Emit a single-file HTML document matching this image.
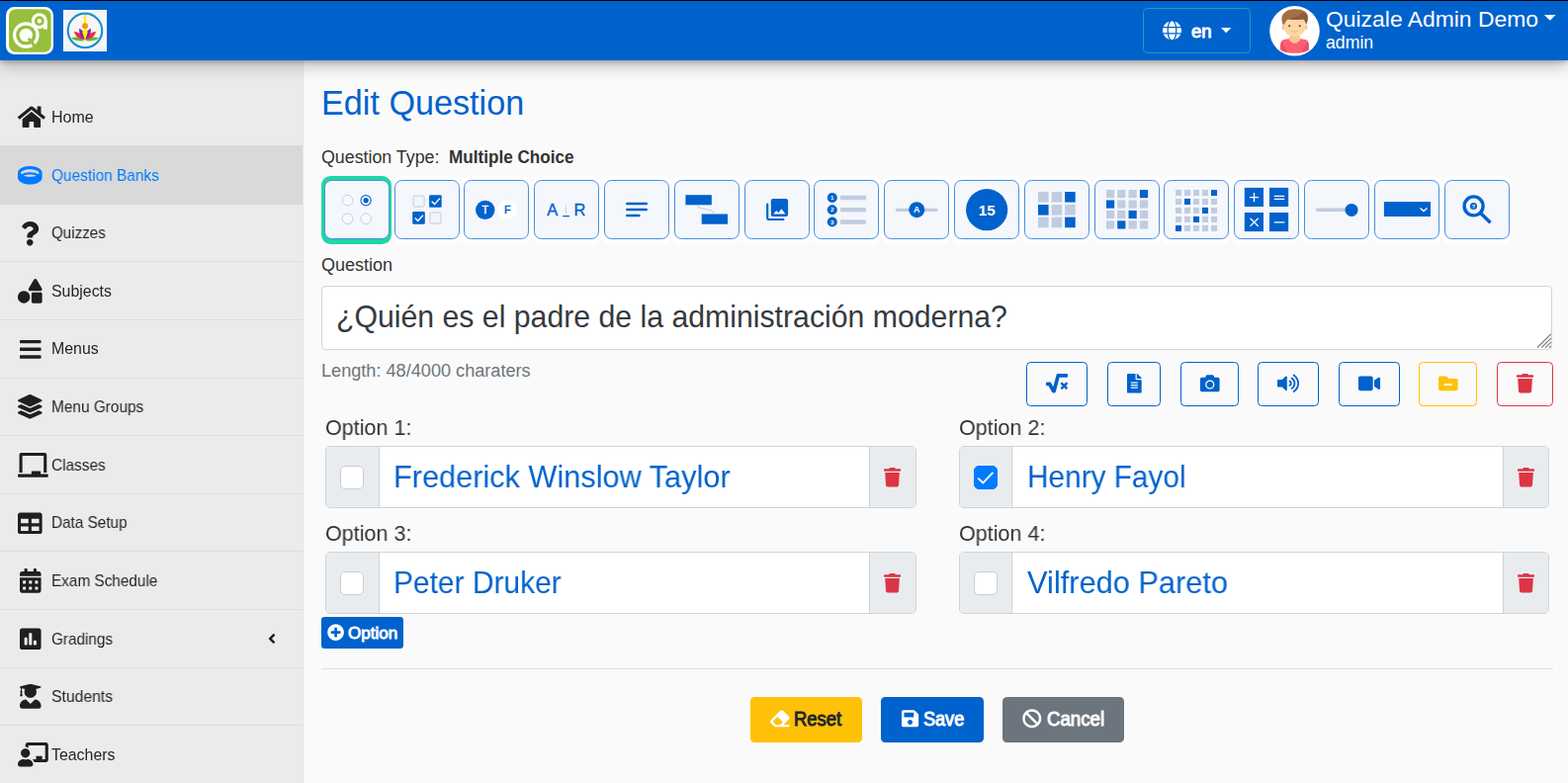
<!DOCTYPE html>
<html lang="en"><head><meta charset="utf-8"><title>Edit Question</title>
<style>
html,body{margin:0;padding:0}
header,aside,main{display:block;margin:0;padding:0}
a.t{text-decoration:none}
body{width:1586px;height:792px;overflow:hidden;position:relative;background:#fafafa;font-family:"Liberation Sans", sans-serif;}
.a{position:absolute;box-sizing:border-box}
.t{position:absolute;white-space:pre;margin:0;padding:0}
.ic{position:absolute;display:block;overflow:visible}

#nav{left:0;top:0;width:1586px;height:61px;background:#0062cc;border-top:1px solid #000;box-shadow:0 2px 4px rgba(0,0,0,.2),0 5px 16px rgba(0,0,0,.26);z-index:5}
#side{left:0;top:61px;width:306.5px;height:731px;background:#ebebeb;border-right:1px solid #e4e4e4}
.sl{left:0;width:306px;height:1px;background:#dcdcdc}
#act{left:0;top:147px;width:306px;height:59.7px;background:#d9d9d9}
#langb{left:1156px;top:8px;width:109.2px;height:45.8px;border:1px solid #17a2b8;border-radius:4.4px}
.tb{width:65.8px;height:60px;top:182px;border:1px solid #4a8fdc;border-radius:7.5px;background:#f4f7fb;overflow:hidden}
.tbw{width:71px;height:69px;top:178px;border-radius:9.5px;background:#fff}
.tbw.on{background:#20d6a6}
#ta{left:325.3px;top:289.1px;width:1245.2px;height:64.5px;background:#fff;border:1px solid #ced4da;border-radius:4.4px}
.mb{top:366.1px;height:44.8px;border:1px solid #0062cc;border-radius:4.4px}
.ig{height:62.7px;background:#fff;border:1px solid #ced4da;border-radius:5px;overflow:hidden}
.ig i{position:absolute;top:0;bottom:0;background:#e9ecef;box-sizing:border-box}
.ig i.p{left:0;width:54px;border-right:1px solid #ced4da}
.ig i.s{right:0;width:47.3px;border-left:1px solid #ced4da}
.cb{width:24px;height:24px;border-radius:5px;background:#fff;border:1.7px solid #c9ced4}
.cb.on{background:#007bff;border-color:#007bff}
.btn{border-radius:4.4px}

.t{z-index:7;transform-origin:0 0}

</style></head>
<body>
<header>
<div class="a" id="nav"></div>

<div class="a" id="langb" style="z-index:6;"></div>
<svg class="ic" style="z-index:6;left:1176.01px;top:21.10px;width:18.99px;height:19.60px" viewBox="0 -448 496 512"><path fill="#fff" transform="scale(1,-1)" d="M336.5 288h-177c14.5 89.2998 48.7002 152 88.5 152s74 -62.7002 88.5 -152zM152 192c0 22.2002 1.2002 43.5 3.2998 64h185.3c2.10059 -20.5 3.30078 -41.7998 3.30078 -64s-1.2002 -43.5 -3.30078 -64h-185.3c-2.09961 20.5 -3.2998 41.7998 -3.2998 64zM476.7 288 h-108c-8.7998 56.9004 -25.6006 107.8 -50 141.6c71.5 -21.1992 129.399 -73.6992 158 -141.6zM177.2 429.6c-24.4004 -33.7998 -41.2002 -84.6992 -49.9004 -141.6h-108c28.5 67.9004 86.5 120.4 157.9 141.6zM487.4 256c5.39941 -20.5 8.5 -41.7998 8.5 -64 s-3.10059 -43.5 -8.60059 -64h-114.6c2.09961 21 3.2998 42.5 3.2998 64s-1.2002 43 -3.2998 64h114.7zM120 192c0 -21.5 1.2002 -43 3.2002 -64h-114.601c-5.39941 20.5 -8.59961 41.7998 -8.59961 64s3.2002 43.5 8.59961 64h114.7 c-2.09961 -21 -3.2998 -42.5 -3.2998 -64zM159.5 96h177c-14.5 -89.2998 -48.7002 -152 -88.5 -152s-74 62.7002 -88.5 152zM318.8 -45.5996c24.4004 33.7998 41.2002 84.6992 50 141.6h108c-28.5996 -67.9004 -86.5996 -120.4 -158 -141.6zM19.2998 96h108 c8.7998 -56.9004 25.6006 -107.8 50 -141.6c-71.5 21.1992 -129.399 73.6992 -158 141.6z"/></svg>
<svg class="ic" style="z-index:6;left:1235px;top:28.2px;width:10.4px;height:5.2px" viewBox="0 0 10 5"><path d="M0 0H10L5 5Z" fill="#fff"/></svg>
<svg class="ic" style="z-index:6;left:1561.6px;top:15.4px;width:11.6px;height:5.8px" viewBox="0 0 10 5"><path d="M0 0H10L5 5Z" fill="#fff"/></svg>

<svg class="ic" style="z-index:6;left:6px;top:7px;width:48px;height:48px" viewBox="0 0 48 48">
<rect x="0" y="0" width="48" height="48" rx="8.5" fill="#fff"/>
<rect x="3.05" y="2.2" width="42.6" height="43.6" rx="7" fill="#97be3c"/>
<circle cx="33.8" cy="14.2" r="8" fill="#fff"/>
<path d="M38 14.2h3.8v8.4h-3.8z" fill="#fff"/>
<circle cx="33.8" cy="14.2" r="4.9" fill="#97be3c"/>
<circle cx="33.8" cy="14.2" r="2.2" fill="#fff"/>
<circle cx="20.3" cy="28.5" r="13.3" fill="#fff"/>
<circle cx="20.3" cy="28.5" r="10.1" fill="#97be3c"/>
<circle cx="20.3" cy="28.5" r="6.7" fill="#fff"/>
<path d="M23.6 32.6L29.3 39.9" stroke="#97be3c" stroke-width="2.9" stroke-linecap="round"/>
</svg>
<svg class="ic" style="z-index:6;left:64px;top:10px;width:44px;height:42px" viewBox="0 0 44 42">
<rect x="0" y="0" width="44" height="42" fill="#f4f4f4"/>
<rect x="0.25" y="0.25" width="43.5" height="41.5" fill="none" stroke="#fff" stroke-width="0.5"/>
<circle cx="21.98" cy="20.9" r="17.2" fill="#f6f6f6" stroke="#fff" stroke-width="3.4"/>
<circle cx="21.98" cy="20.9" r="17.25" fill="none" stroke="#2090d0" stroke-width="2.2"/>
<path d="M21.98 4.9v9.6" stroke="#ffee00" stroke-width="2.3"/>
<path d="M7.8 28.6C12.5 26.6 17.5 27 21.2 31.4C16 32 11.5 31.4 7.8 28.6Z" fill="#5bbd2f"/>
<path d="M36.2 28.6C31.5 26.6 26.5 27 22.8 31.4C28 32 32.5 31.4 36.2 28.6Z" fill="#5bbd2f"/>
<path d="M11 21.9C16 22.4 20 25.4 21.6 30.2C16.5 29.6 11.8 27 11 21.9Z" fill="#ee2a5b"/>
<path d="M33 21.9C28 22.4 24 25.4 22.4 30.2C27.5 29.6 32.2 27 33 21.9Z" fill="#ee2a5b"/>
<path d="M16.2 18.8C21 21.3 22.8 25.3 22 30.6C17.6 27.6 15.6 23.6 16.2 18.8Z" fill="#7b2a9c"/>
<path d="M27.8 18.8C23 21.3 21.2 25.3 22 30.6C26.4 27.6 28.4 23.6 27.8 18.8Z" fill="#7b2a9c"/>
<path d="M22 18.3L24.7 22.6L22 31.2L19.3 22.6Z" fill="#ffee00"/>
<circle cx="21.98" cy="16.25" r="3" fill="#f7941d"/>
</svg>


<svg class="ic" style="z-index:6;left:1284px;top:5.6px;width:51px;height:50.6px" viewBox="0 0 51 50.6">
<defs><clipPath id="avc"><circle cx="25.5" cy="25.3" r="24.6"/></clipPath></defs>
<circle cx="25.5" cy="25.3" r="25.3" fill="#fff"/>
<g clip-path="url(#avc)">
<path d="M11.3 44.5C10.6 39 11.6 35.2 14.5 34.1L21 33H30L36.5 34.1C39.4 35.2 40.4 39 39.7 44.5C36 47.6 30.5 47.8 25.5 47.8S15 47.6 11.3 44.5Z" fill="#ff5f74"/>
<path d="M11.3 44.5C10.8 40.5 11.3 37 12.6 35.4L17.3 44.8L16.8 46.6Z" fill="#e8506a"/>
<path d="M39.7 44.5C40.2 40.5 39.7 37 38.4 35.4L33.7 44.8L34.2 46.6Z" fill="#e8506a"/>
<path d="M19.8 33.2C21 36.6 23 37.8 25.5 37.8S30 36.6 31.2 33.2L30 28.5H21Z" fill="#f9c78f"/>
<ellipse cx="14.3" cy="21.4" rx="1.7" ry="2.6" fill="#f7c58a"/>
<ellipse cx="36.7" cy="21.4" rx="1.7" ry="2.6" fill="#f7c58a"/>
<path d="M15.2 9H35.8V22.5C35.8 27.5 31.5 30.6 25.5 30.6S15.2 27.5 15.2 22.5Z" fill="#fdd7a3"/>
<path d="M13.6 18.8C11.6 13.5 12.3 8.5 16 6.3C18.5 3.6 24 2.6 28.5 3.6C33 3.4 37.6 5.6 38.7 9.5C39.4 12.4 38.6 16 37.2 18.8C36.4 16.6 35.6 14.8 34.8 13.6C29.5 14.3 22.5 14.2 18.4 13.6C17.4 15 15.8 16.2 15.2 18.8Z" fill="#a36f47"/>
<path d="M18.4 13.6C24 12.4 30 10 34 6.4C36.5 7.6 38 9.3 38.7 11C38.8 13.5 38.2 16.4 37.2 18.8C36.4 16.6 35.6 14.8 34.8 13.6C29.5 14.3 22.5 14.2 18.4 13.6Z" fill="#8e5d3b"/>
<circle cx="20.2" cy="20.3" r="1.05" fill="#5a3a2a"/>
<circle cx="30.7" cy="20.3" r="1.05" fill="#5a3a2a"/>
<path d="M22.3 24.9C24.2 26.5 26.8 26.5 28.7 24.9" stroke="#eeb37c" stroke-width="1" fill="none" stroke-linecap="round"/>
</g>
</svg>

<span class="t" id="uname" style="left:1340.92px;top:8.02px;font-size:22.8px;line-height:22.8px;font-weight:400;color:#fff;transform:scaleX(1.0042)">Quizale Admin Demo</span>
<span class="t" id="urole" style="left:1341.05px;top:35.02px;font-size:17.5px;line-height:17.5px;font-weight:400;color:#fff;transform:scaleX(1.0111)">admin</span>
<span class="t" id="lang" style="left:1204.96px;top:23.02px;font-size:18.6px;line-height:18.6px;font-weight:400;-webkit-text-stroke:0.90px #fff;color:#fff;transform:scaleX(1.0005)">en</span>
</header>
<aside>
<div class="a" id="side"></div>
<div class="a" id="act"></div>
<div class="a sl" style="top:264px"></div>
<div class="a sl" style="top:323px"></div>
<div class="a sl" style="top:382px"></div>
<div class="a sl" style="top:440px"></div>
<div class="a sl" style="top:499px"></div>
<div class="a sl" style="top:557px"></div>
<div class="a sl" style="top:616px"></div>
<div class="a sl" style="top:675px"></div>
<div class="a sl" style="top:733px"></div>
<svg class="ic" style="left:18.20px;top:105.68px;width:27.72px;height:24.64px" viewBox="0 -448 576 512"><path fill="#1f1f1f" transform="scale(1,-1)" d="M280.37 299.74c2.09082 1.68555 4.76562 2.69434 7.6582 2.69434s5.55078 -1.00879 7.6416 -2.69434l184.33 -151.74v-164c0 -8.83105 -7.16895 -16 -16 -16l-112.02 0.30957c-8.83105 0 -16.001 7.16895 -16.001 15.999c0 0.0175781 0 0.0341797 0.000976562 0.0517578 v95.6396c0 8.83105 -7.16992 16 -16 16h-64c-8.83105 0 -16 -7.16895 -16 -16v-95.71c0 -8.80371 -7.12695 -15.9561 -15.9209 -16l-112.06 -0.290039c-8.83105 0 -16 7.16895 -16 16v163.89zM571.6 196.53c2.70703 -2.20117 4.42578 -5.56152 4.42578 -9.31836 c0 -2.88867 -1.02246 -5.54004 -2.72559 -7.6123l-25.5 -31c-2.20117 -2.66309 -5.53418 -4.35059 -9.25684 -4.35059c-2.90332 0 -5.56641 1.0332 -7.64258 2.75098l-235.23 193.74c-2.09082 1.68555 -4.7666 2.69434 -7.6582 2.69434 c-2.89258 0 -5.55078 -1.00879 -7.6416 -2.69434l-235.22 -193.74c-2.0752 -1.71387 -4.73926 -2.75586 -7.63867 -2.75586c-3.73242 0 -7.07031 1.70898 -9.27148 4.38574l-25.5 31c-1.71875 2.07617 -2.7627 4.74414 -2.7627 7.64648 c0 3.72266 1.69824 7.05176 4.3623 9.25391l253.13 208.47c8.29102 6.82227 18.9668 10.9209 30.5312 10.9209s22.1787 -4.09863 30.4688 -10.9209l89.5303 -73.6602v72.6104c0 6.62305 5.37695 12 12 12h56c6.62305 0 12 -5.37695 12 -12v-138.51z"/></svg>
<svg class="ic" style="left:18.08px;top:164.68px;width:24.64px;height:24.64px" viewBox="0 -448 512 512"><path fill="#007bff" transform="scale(1,-1)" d="M256 384c145.94 0 256 -61.9102 256 -144v-98.1299c0 -78.3506 -114.62 -141.87 -256 -141.87s-256 63.5195 -256 141.87v98.1299c0 82.0898 110.06 144 256 144zM256 320c-106.04 0 -192 -35.8203 -192 -80c0 -9.25977 3.96973 -18.1201 10.9102 -26.3896 c44.9395 26.1797 108.859 42.3896 181.09 42.3896s136.15 -16.21 181.09 -42.3896c6.94043 8.26953 10.9102 17.1299 10.9102 26.3896c0 44.1797 -85.96 80 -192 80zM120.43 183.36c34.7305 -14.4307 82.6406 -23.3604 135.57 -23.3604s100.84 8.92969 135.57 23.3604 c-34.6104 14.71 -81.21 24.6396 -135.57 24.6396s-100.96 -9.92969 -135.57 -24.6396z"/></svg>
<svg class="ic" style="left:21.16px;top:223.68px;width:18.48px;height:24.64px" viewBox="0 -448 384 512"><path fill="#1f1f1f" transform="scale(1,-1)" d="M202.021 448c84.8809 0 175.482 -66.2559 175.481 -153.6c0 -115.982 -125.268 -117.768 -125.268 -160.627v-5.77344c0 -13.2549 -10.7451 -24 -24 -24h-72.4717c-13.2549 0 -24 10.7451 -24 24v9.78809c0 61.8291 46.876 86.5449 82.2998 106.405 c30.376 17.0293 48.9922 28.6113 48.9922 51.1641c0 29.832 -38.0518 49.6309 -68.8154 49.6309c-39.127 0 -57.708 -18.0684 -82.7568 -49.4492c-8.12109 -10.1738 -22.8809 -12.0127 -33.2529 -4.14844l-43.1387 32.709c-10.2705 7.78809 -12.541 22.2939 -5.17773 32.874 c40.5889 58.3232 92.2881 91.0264 172.107 91.0264zM192 74.541c38.1963 0 69.2715 -31.0742 69.2715 -69.2695c0 -38.1963 -31.0752 -69.2715 -69.2715 -69.2715s-69.2715 31.0752 -69.2715 69.2695c0 38.1963 31.0752 69.2715 69.2715 69.2715z"/></svg>
<svg class="ic" style="left:18.08px;top:281.68px;width:24.64px;height:24.64px" viewBox="0 -448 512 512"><path fill="#1f1f1f" transform="scale(1,-1)" d="M128 192c70.6455 0 128 -57.3545 128 -128s-57.3545 -128 -128 -128s-128 57.3545 -128 128s57.3545 128 128 128zM507 246.86c14.2402 -24.3799 -3.58008 -54.8604 -32.0898 -54.8604h-213.82c-28.5098 0 -46.3301 30.4805 -32.0898 54.8604l106.93 182.85 c6.48828 10.9688 18.3906 18.3311 32.0469 18.3311c13.6553 0 25.6055 -7.3623 32.0938 -18.3311zM480 160c17.6611 0 32 -14.3389 32 -32v-160c0 -17.6611 -14.3389 -32 -32 -32h-160c-17.6611 0 -32 14.3389 -32 32v160c0 17.6611 14.3389 32 32 32h160z"/></svg>
<svg class="ic" style="left:19.62px;top:340.68px;width:21.56px;height:24.64px" viewBox="0 -448 448 512"><path fill="#1f1f1f" transform="scale(1,-1)" d="M16 316c-8.83691 0 -16 7.16309 -16 16v40c0 8.83691 7.16309 16 16 16h416c8.83691 0 16 -7.16309 16 -16v-40c0 -8.83691 -7.16309 -16 -16 -16h-416zM16 156c-8.83691 0 -16 7.16309 -16 16v40c0 8.83691 7.16309 16 16 16h416c8.83691 0 16 -7.16309 16 -16v-40 c0 -8.83691 -7.16309 -16 -16 -16h-416zM16 -4c-8.83691 0 -16 7.16309 -16 16v40c0 8.83691 7.16309 16 16 16h416c8.83691 0 16 -7.16309 16 -16v-40c0 -8.83691 -7.16309 -16 -16 -16h-416z"/></svg>
<svg class="ic" style="left:18.08px;top:398.68px;width:24.64px;height:24.64px" viewBox="0 -448 512 512"><path fill="#1f1f1f" transform="scale(1,-1)" d="M12.4102 299.98c-16.5498 7.50977 -16.5498 32.5293 0 40.0391l232.95 105.671c3.23633 1.47949 6.87695 2.30371 10.666 2.30371s7.38672 -0.824219 10.624 -2.30371l232.93 -105.681c16.5498 -7.50977 16.5498 -32.5195 0 -40.0293l-232.94 -105.671 c-6.7998 -3.08984 -14.4893 -3.08984 -21.29 0zM499.59 211.7c16.5498 -7.5 16.5498 -32.5 0 -40l-232.95 -105.59c-6.7998 -3.08008 -14.4893 -3.08008 -21.29 0l-232.939 105.59c-16.5498 7.5 -16.5498 32.5 0 40l58.0996 26.3301l161.63 -73.2705 c7.57031 -3.42969 15.5908 -5.16992 23.8604 -5.16992s16.2998 1.74023 23.8604 5.16992l161.64 73.2705zM499.59 83.9004c16.5498 -7.5 16.5498 -32.5 0 -40l-232.95 -105.591c-6.7998 -3.0791 -14.4893 -3.0791 -21.29 0l-232.939 105.591 c-16.5498 7.5 -16.5498 32.5 0 40l57.8799 26.2295l161.85 -73.3701c7.57031 -3.42969 15.5908 -5.16992 23.8604 -5.16992s16.2998 1.74023 23.8604 5.16992l161.859 73.3701z"/></svg>
<svg class="ic" style="left:18.20px;top:457.68px;width:30.80px;height:24.64px" viewBox="0 -448 640 512"><path fill="#1f1f1f" transform="scale(1,-1)" d="M96 384v-352h-64v376c0 22.0596 17.9404 40 40 40h496c22.0596 0 40 -17.9404 40 -40v-376h-64v352h-448zM624 0c8.83984 0 16 -7.16016 16 -16v-32c0 -8.83984 -7.16016 -16 -16 -16h-608c-8.83984 0 -16 7.16016 -16 16v32c0 8.83984 7.16016 16 16 16h272v64h192v-64 h144z"/></svg>
<svg class="ic" style="left:18.08px;top:516.68px;width:24.64px;height:24.64px" viewBox="0 -448 512 512"><path fill="#1f1f1f" transform="scale(1,-1)" d="M464 416c26.5098 0 48 -21.4902 48 -48v-352c0 -26.5098 -21.4902 -48 -48 -48h-416c-26.5098 0 -48 21.4902 -48 48v352c0 26.5098 21.4902 48 48 48h416zM224 32v96h-160v-96h160zM224 192v96h-160v-96h160zM448 32v96h-160v-96h160zM448 192v96h-160v-96h160z"/></svg>
<svg class="ic" style="left:19.62px;top:574.68px;width:21.56px;height:24.64px" viewBox="0 -448 448 512"><path fill="#1f1f1f" transform="scale(1,-1)" d="M0 -16v272h448v-272c0 -26.5 -21.5 -48 -48 -48h-352c-26.5 0 -48 21.5 -48 48zM320 180v-40c0 -6.59961 5.40039 -12 12 -12h40c6.59961 0 12 5.40039 12 12v40c0 6.59961 -5.40039 12 -12 12h-40c-6.59961 0 -12 -5.40039 -12 -12zM320 52v-40 c0 -6.59961 5.40039 -12 12 -12h40c6.59961 0 12 5.40039 12 12v40c0 6.59961 -5.40039 12 -12 12h-40c-6.59961 0 -12 -5.40039 -12 -12zM192 180v-40c0 -6.59961 5.40039 -12 12 -12h40c6.59961 0 12 5.40039 12 12v40c0 6.59961 -5.40039 12 -12 12h-40 c-6.59961 0 -12 -5.40039 -12 -12zM192 52v-40c0 -6.59961 5.40039 -12 12 -12h40c6.59961 0 12 5.40039 12 12v40c0 6.59961 -5.40039 12 -12 12h-40c-6.59961 0 -12 -5.40039 -12 -12zM64 180v-40c0 -6.59961 5.40039 -12 12 -12h40c6.59961 0 12 5.40039 12 12v40 c0 6.59961 -5.40039 12 -12 12h-40c-6.59961 0 -12 -5.40039 -12 -12zM64 52v-40c0 -6.59961 5.40039 -12 12 -12h40c6.59961 0 12 5.40039 12 12v40c0 6.59961 -5.40039 12 -12 12h-40c-6.59961 0 -12 -5.40039 -12 -12zM400 384c26.5 0 48 -21.5 48 -48v-48h-448v48 c0 26.5 21.5 48 48 48h48v48c0 8.7998 7.2002 16 16 16h32c8.7998 0 16 -7.2002 16 -16v-48h128v48c0 8.7998 7.2002 16 16 16h32c8.7998 0 16 -7.2002 16 -16v-48h48z"/></svg>
<svg class="ic" style="left:19.62px;top:633.68px;width:21.56px;height:24.64px" viewBox="0 -448 448 512"><path fill="#1f1f1f" transform="scale(1,-1)" d="M400 416c26.5 0 48 -21.5 48 -48v-352c0 -26.5 -21.5 -48 -48 -48h-352c-26.5 0 -48 21.5 -48 48v352c0 26.5 21.5 48 48 48h352zM160 80v128c0 8.83984 -7.16016 16 -16 16h-32c-8.83984 0 -16 -7.16016 -16 -16v-128c0 -8.83984 7.16016 -16 16 -16h32 c8.83984 0 16 7.16016 16 16zM256 80v224c0 8.83984 -7.16016 16 -16 16h-32c-8.83984 0 -16 -7.16016 -16 -16v-224c0 -8.83984 7.16016 -16 16 -16h32c8.83984 0 16 7.16016 16 16zM352 80v64c0 8.83984 -7.16016 16 -16 16h-32c-8.83984 0 -16 -7.16016 -16 -16v-64 c0 -8.83984 7.16016 -16 16 -16h32c8.83984 0 16 7.16016 16 16z"/></svg>
<svg class="ic" style="left:19.62px;top:691.68px;width:21.56px;height:24.64px" viewBox="0 -448 448 512"><path fill="#1f1f1f" transform="scale(1,-1)" d="M319.4 127.4c71.5 -3.10059 128.6 -61.6006 128.6 -133.801v-9.59961c0 -26.5 -21.5 -48 -48 -48h-352c-26.5 0 -48 21.5 -48 48v9.59961c0 72.2002 57.0996 130.7 128.6 133.801l95.4004 -95.4004zM13.5996 368.2c-18.0996 4.39941 -18.0996 27.2002 0 31.5996 l190.601 45.9004c13 3.09961 26.7002 3.09961 39.7002 0l190.399 -46c18.2002 -4.40039 18.2002 -27.1006 0 -31.5l-96.2998 -23.2002c8.7002 -17.2002 14 -36.4004 14 -57c0 -70.7002 -57.2998 -128 -128 -128s-128 57.2998 -128 128c0 20.5996 5.40039 39.7998 14 57 l-66 15.9004v-52.6006c7 -4.2002 12 -11.5 12 -20.2998c0 -8.40039 -4.59961 -15.4004 -11.0996 -19.7002l15.5996 -62.2998c1.7002 -6.90039 -2.09961 -14 -7.59961 -14h-41.8008c-5.5 0 -9.2998 7.09961 -7.59961 14l15.5996 62.2998 c-6.5 4.2998 -11.0996 11.2998 -11.0996 19.7002c0 8.7998 5 16.0996 12 20.2998v58.4004z"/></svg>
<svg class="ic" style="left:18.20px;top:750.68px;width:30.80px;height:24.64px" viewBox="0 -448 640 512"><path fill="#1f1f1f" transform="scale(1,-1)" d="M208 96c62.0596 0 112.33 -50.4805 112 -112.62c-0.139648 -26.2598 -21.7305 -47.3799 -48 -47.3799h-224c-26.2695 0 -47.8604 21.1201 -48 47.3799c-0.330078 62.1396 49.9404 112.62 112 112.62c2.38965 0 4.76953 -0.349609 7.0498 -1.08984 c12.9697 -4.20996 26.6006 -6.91016 40.9502 -6.91016s27.9805 2.7002 40.9404 6.91016c2.2793 0.740234 4.66992 1.08984 7.05957 1.08984zM160 128c-53.0195 0 -96 42.9805 -96 96s42.9805 96 96 96s96 -42.9805 96 -96s-42.9805 -96 -96 -96zM592 448 c26.4697 0 48 -22.25 48 -49.5898v-316.82c0 -27.3398 -21.5303 -49.5898 -48 -49.5898h-244.55c-6.57031 25.2695 -20.5898 47.3096 -39.6904 64h76.2402v64h128v-64h64v288h-352v-49.7998c-18.9004 11.0195 -40.5801 17.7998 -64 17.7998v46.4102 c0 27.3398 21.5303 49.5898 48 49.5898h384z"/></svg>
<svg class="ic" style="left:270.64px;top:637.98px;width:7.92px;height:15.84px" viewBox="0 -448 256 512"><path fill="#1f1f1f" transform="scale(1,-1)" d="M31.7002 209l136 136c9.39941 9.40039 24.5996 9.40039 33.8994 0l22.6006 -22.5996c9.39941 -9.40039 9.39941 -24.6006 0 -33.9004l-96.2998 -96.5l96.3994 -96.4004c9.40039 -9.39941 9.40039 -24.5996 0 -33.8994l-22.5996 -22.7002 c-9.40039 -9.40039 -24.6006 -9.40039 -33.9004 0l-136 136c-9.5 9.40039 -9.5 24.5996 -0.0996094 34z"/></svg>
<a class="t" id="sb0" style="left:51.61px;top:111.02px;font-size:15.9px;line-height:15.9px;font-weight:400;color:#212529;transform:scaleX(1.0085);will-change:transform">Home</a>
<a class="t" id="sb1" style="left:51.74px;top:170.02px;font-size:15.9px;line-height:15.9px;font-weight:400;color:#007bff;transform:scaleX(0.9709);will-change:transform">Question Banks</a>
<a class="t" id="sb2" style="left:51.75px;top:228.02px;font-size:15.9px;line-height:15.9px;font-weight:400;color:#212529;transform:scaleX(0.9545);will-change:transform">Quizzes</a>
<a class="t" id="sb3" style="left:51.53px;top:287.02px;font-size:15.9px;line-height:15.9px;font-weight:400;color:#212529;transform:scaleX(0.9932);will-change:transform">Subjects</a>
<a class="t" id="sb4" style="left:51.62px;top:345.02px;font-size:15.9px;line-height:15.9px;font-weight:400;color:#212529;transform:scaleX(1.0011);will-change:transform">Menus</a>
<a class="t" id="sb5" style="left:51.66px;top:404.02px;font-size:15.9px;line-height:15.9px;font-weight:400;color:#212529;transform:scaleX(0.9690);will-change:transform">Menu Groups</a>
<a class="t" id="sb6" style="left:51.77px;top:463.02px;font-size:15.9px;line-height:15.9px;font-weight:400;color:#212529;transform:scaleX(0.9692);will-change:transform">Classes</a>
<a class="t" id="sb7" style="left:51.67px;top:521.02px;font-size:15.9px;line-height:15.9px;font-weight:400;color:#212529;transform:scaleX(0.9630);will-change:transform">Data Setup</a>
<a class="t" id="sb8" style="left:51.67px;top:580.02px;font-size:15.9px;line-height:15.9px;font-weight:400;color:#212529;transform:scaleX(0.9642);will-change:transform">Exam Schedule</a>
<a class="t" id="sb9" style="left:51.79px;top:639.02px;font-size:15.9px;line-height:15.9px;font-weight:400;color:#212529;transform:scaleX(0.9624);will-change:transform">Gradings</a>
<a class="t" id="sb10" style="left:51.53px;top:697.02px;font-size:15.9px;line-height:15.9px;font-weight:400;color:#212529;transform:scaleX(0.9905);will-change:transform">Students</a>
<a class="t" id="sb11" style="left:51.65px;top:756.02px;font-size:15.9px;line-height:15.9px;font-weight:400;color:#212529;transform:scaleX(0.9928);will-change:transform">Teachers</a>
</aside>
<main>

<div class="a tbw" style="left:1458px"></div>
<div class="a tbw" style="left:1387px"></div>
<div class="a tbw" style="left:1316px"></div>
<div class="a tbw" style="left:1245px"></div>
<div class="a tbw" style="left:1174px"></div>
<div class="a tbw" style="left:1104px"></div>
<div class="a tbw" style="left:1033.1px"></div>
<div class="a tbw" style="left:962px"></div>
<div class="a tbw" style="left:891px"></div>
<div class="a tbw" style="left:820px"></div>
<div class="a tbw" style="left:750.1px"></div>
<div class="a tbw" style="left:679px"></div>
<div class="a tbw" style="left:608.1px"></div>
<div class="a tbw" style="left:537px"></div>
<div class="a tbw" style="left:466.1px"></div>
<div class="a tbw" style="left:396px"></div>
<div class="a tbw on" style="left:325px"></div>
<div class="a tb" style="left:328.30px"><svg class="ic" style="left:-1px;top:-1px;width:66px;height:60px" viewBox="0 0 66 60"><circle cx="23.6" cy="20.7" r="5.3" fill="#f7f9fc" stroke="#b9c5da" stroke-width="0.8"/><circle cx="42.1" cy="20.7" r="5.1" fill="#fff" stroke="#0062cc" stroke-width="1.1"/><circle cx="42.1" cy="20.7" r="2.7" fill="#0062cc"/><circle cx="23.6" cy="39.3" r="5.3" fill="#f7f9fc" stroke="#b9c5da" stroke-width="0.8"/><circle cx="42.1" cy="39.3" r="5.3" fill="#f7f9fc" stroke="#b9c5da" stroke-width="0.8"/></svg></div>
<div class="a tb" style="left:399.00px"><svg class="ic" style="left:-1px;top:-1px;width:66px;height:60px" viewBox="0 0 66 60"><rect x="19.1" y="16.1" width="11" height="11" rx="1.3" fill="#f1f4f9" stroke="#c0cce0" stroke-width="1"/><rect x="35.1" y="15.2" width="12.6" height="12.6" rx="1.3" fill="#0062cc"/><path d="M37.7 21.7l2.9 2.9l5.2-5.8" stroke="#fff" stroke-width="1.4" fill="none"/><rect x="18.2" y="32.1" width="12.6" height="12.6" rx="1.3" fill="#0062cc"/><path d="M20.8 38.6l2.9 2.9l5.2-5.8" stroke="#fff" stroke-width="1.4" fill="none"/><rect x="36.0" y="33.0" width="11" height="11" rx="1.3" fill="#f1f4f9" stroke="#c0cce0" stroke-width="1"/></svg></div>
<div class="a tb" style="left:469.10px"><svg class="ic" style="left:-1px;top:-1px;width:66px;height:60px" viewBox="0 0 66 60"><circle cx="21.75" cy="30.4" r="9.7" fill="#0062cc"/><circle cx="44.1" cy="30.4" r="9.7" fill="#fff"/><text x="21.75" y="34.3" font-family="Liberation Sans, sans-serif" font-size="10.8" font-weight="400" fill="#fff" stroke="#fff" stroke-width="0.45" text-anchor="middle">T</text><text x="44.3" y="34.3" font-family="Liberation Sans, sans-serif" font-size="10.8" font-weight="400" fill="#0062cc" stroke="#0062cc" stroke-width="0.45" text-anchor="middle">F</text></svg></div>
<div class="a tb" style="left:540.00px"><svg class="ic" style="left:-1px;top:-1px;width:66px;height:60px" viewBox="0 0 66 60"><text x="18.65" y="36.3" font-family="Liberation Sans, sans-serif" font-size="16.4" font-weight="400" fill="#0062cc" stroke="#0062cc" stroke-width="0.35" text-anchor="middle">A</text><text x="46.5" y="36.3" font-family="Liberation Sans, sans-serif" font-size="16.4" font-weight="400" fill="#0062cc" stroke="#0062cc" stroke-width="0.35" text-anchor="middle">R</text><path d="M29.3 36.6h6.8" stroke="#0062cc" stroke-width="1.2"/><path d="M32.4 27v7.3" stroke="#c0cce0" stroke-width="0.9"/><circle cx="32.4" cy="25.2" r="0.55" fill="#c0cce0"/></svg></div>
<div class="a tb" style="left:611.10px"><svg class="ic" style="left:-1px;top:-1px;width:66px;height:60px" viewBox="0 0 66 60"><path d="M23.2 23.95H42.8M23.2 30H42.8M23.2 36H35.4" stroke="#0062cc" stroke-width="2.4" stroke-linecap="round" fill="none"/></svg></div>
<div class="a tb" style="left:682.00px"><svg class="ic" style="left:-1px;top:-1px;width:66px;height:60px" viewBox="0 0 66 60"><rect x="11.4" y="15.2" width="26.4" height="10.1" fill="#0062cc"/><rect x="27.7" y="34.5" width="26.3" height="10.2" fill="#0062cc"/><path d="M23.4 25.3C23.6 31.5 40 27.5 40 34.5" stroke="#b3c0d8" stroke-width="0.9" fill="none"/></svg></div>
<div class="a tb" style="left:753.10px"><svg class="ic" style="left:-1px;top:-1px;width:66px;height:60px" viewBox="0 0 66 60"><path d="M23.2 24.6V38.2Q23.2 40 25 40H39.4" stroke="#0062cc" stroke-width="2.2" stroke-linecap="round" fill="none"/><rect x="26.8" y="19.1" width="17.3" height="17.9" rx="2.2" fill="#0062cc"/><path d="M29.4 34.5L32.2 31L34.2 33.2L37.5 29.3L41.4 34.5Z" fill="#fff"/></svg></div>
<div class="a tb" style="left:823.00px"><svg class="ic" style="left:-1px;top:-1px;width:66px;height:60px" viewBox="0 0 66 60"><circle cx="18.8" cy="18" r="5" fill="#0062cc"/><text x="18.8" y="20.2" font-family="Liberation Sans, sans-serif" font-size="6.2" font-weight="700" fill="#fff" text-anchor="middle">1</text><rect x="27" y="15.8" width="26" height="4.4" fill="#c0cce0"/><circle cx="18.8" cy="30.2" r="5" fill="#0062cc"/><text x="18.8" y="32.4" font-family="Liberation Sans, sans-serif" font-size="6.2" font-weight="700" fill="#fff" text-anchor="middle">2</text><rect x="27" y="28.0" width="26" height="4.4" fill="#c0cce0"/><circle cx="18.8" cy="42.5" r="5" fill="#0062cc"/><text x="18.8" y="44.7" font-family="Liberation Sans, sans-serif" font-size="6.2" font-weight="700" fill="#fff" text-anchor="middle">3</text><rect x="27" y="40.3" width="26" height="4.4" fill="#c0cce0"/></svg></div>
<div class="a tb" style="left:894.00px"><svg class="ic" style="left:-1px;top:-1px;width:66px;height:60px" viewBox="0 0 66 60"><path d="M13.5 30.35H52.8" stroke="#c0cce0" stroke-width="3.4" stroke-linecap="round"/><circle cx="33.3" cy="30.2" r="8" fill="#0062cc"/><text x="33.3" y="33.4" font-family="Liberation Sans, sans-serif" font-size="9" font-weight="700" fill="#fff" text-anchor="middle">A</text></svg></div>
<div class="a tb" style="left:965.00px"><svg class="ic" style="left:-1px;top:-1px;width:66px;height:60px" viewBox="0 0 66 60"><circle cx="33.15" cy="30.2" r="21.1" fill="#0062cc"/><text x="33.3" y="36.05" font-family="Liberation Sans, sans-serif" font-size="15.2" font-weight="700" fill="#fff" text-anchor="middle">15</text></svg></div>
<div class="a tb" style="left:1036.10px"><svg class="ic" style="left:-1px;top:-1px;width:66px;height:60px" viewBox="0 0 66 60"><rect x="14" y="12" width="10.6" height="10.6" fill="#c0cce0"/><rect x="27.65" y="12" width="10.6" height="10.6" fill="#c0cce0"/><rect x="41.1" y="12" width="10.6" height="10.6" fill="#0062cc"/><rect x="14" y="25" width="10.6" height="10.6" fill="#0062cc"/><rect x="27.65" y="25" width="10.6" height="10.6" fill="#c0cce0"/><rect x="41.1" y="25" width="10.6" height="10.6" fill="#c0cce0"/><rect x="14" y="37.6" width="10.6" height="10.6" fill="#c0cce0"/><rect x="27.65" y="37.6" width="10.6" height="10.6" fill="#c0cce0"/><rect x="41.1" y="37.6" width="10.6" height="10.6" fill="#0062cc"/></svg></div>
<div class="a tb" style="left:1107.00px"><svg class="ic" style="left:-1px;top:-1px;width:66px;height:60px" viewBox="0 0 66 60"><rect x="12" y="10" width="8.2" height="8.2" fill="#c0cce0"/><rect x="23.2" y="10" width="8.2" height="8.2" fill="#c0cce0"/><rect x="34.55" y="10" width="8.2" height="8.2" fill="#c0cce0"/><rect x="45.9" y="10" width="8.2" height="8.2" fill="#0062cc"/><rect x="12" y="20.45" width="8.2" height="8.2" fill="#0062cc"/><rect x="23.2" y="20.45" width="8.2" height="8.2" fill="#c0cce0"/><rect x="34.55" y="20.45" width="8.2" height="8.2" fill="#c0cce0"/><rect x="45.9" y="20.45" width="8.2" height="8.2" fill="#c0cce0"/><rect x="12" y="30.9" width="8.2" height="8.2" fill="#c0cce0"/><rect x="23.2" y="30.9" width="8.2" height="8.2" fill="#c0cce0"/><rect x="34.55" y="30.9" width="8.2" height="8.2" fill="#0062cc"/><rect x="45.9" y="30.9" width="8.2" height="8.2" fill="#c0cce0"/><rect x="12" y="41.3" width="8.2" height="8.2" fill="#c0cce0"/><rect x="23.2" y="41.3" width="8.2" height="8.2" fill="#0062cc"/><rect x="34.55" y="41.3" width="8.2" height="8.2" fill="#c0cce0"/><rect x="45.9" y="41.3" width="8.2" height="8.2" fill="#c0cce0"/></svg></div>
<div class="a tb" style="left:1177.00px"><svg class="ic" style="left:-1px;top:-1px;width:66px;height:60px" viewBox="0 0 66 60"><rect x="12" y="10" width="6.05" height="6.05" fill="#c0cce0"/><rect x="21" y="10" width="6.05" height="6.05" fill="#c0cce0"/><rect x="30" y="10" width="6.05" height="6.05" fill="#c0cce0"/><rect x="39" y="10" width="6.05" height="6.05" fill="#c0cce0"/><rect x="48" y="10" width="6.05" height="6.05" fill="#0062cc"/><rect x="12" y="18.95" width="6.05" height="6.05" fill="#c0cce0"/><rect x="21" y="18.95" width="6.05" height="6.05" fill="#0062cc"/><rect x="30" y="18.95" width="6.05" height="6.05" fill="#c0cce0"/><rect x="39" y="18.95" width="6.05" height="6.05" fill="#c0cce0"/><rect x="48" y="18.95" width="6.05" height="6.05" fill="#c0cce0"/><rect x="12" y="27.9" width="6.05" height="6.05" fill="#c0cce0"/><rect x="21" y="27.9" width="6.05" height="6.05" fill="#c0cce0"/><rect x="30" y="27.9" width="6.05" height="6.05" fill="#c0cce0"/><rect x="39" y="27.9" width="6.05" height="6.05" fill="#0062cc"/><rect x="48" y="27.9" width="6.05" height="6.05" fill="#c0cce0"/><rect x="12" y="36.85" width="6.05" height="6.05" fill="#c0cce0"/><rect x="21" y="36.85" width="6.05" height="6.05" fill="#c0cce0"/><rect x="30" y="36.85" width="6.05" height="6.05" fill="#0062cc"/><rect x="39" y="36.85" width="6.05" height="6.05" fill="#c0cce0"/><rect x="48" y="36.85" width="6.05" height="6.05" fill="#c0cce0"/><rect x="12" y="45.9" width="6.05" height="6.05" fill="#0062cc"/><rect x="21" y="45.9" width="6.05" height="6.05" fill="#c0cce0"/><rect x="30" y="45.9" width="6.05" height="6.05" fill="#c0cce0"/><rect x="39" y="45.9" width="6.05" height="6.05" fill="#c0cce0"/><rect x="48" y="45.9" width="6.05" height="6.05" fill="#c0cce0"/></svg></div>
<div class="a tb" style="left:1248.00px"><svg class="ic" style="left:-1px;top:-1px;width:66px;height:60px" viewBox="0 0 66 60"><rect x="10.8" y="7.9" width="19.2" height="19.1" fill="#0062cc"/><rect x="36" y="7.9" width="19.2" height="19.1" fill="#0062cc"/><rect x="10.8" y="33" width="19.2" height="19.1" fill="#0062cc"/><rect x="36" y="33" width="19.2" height="19.1" fill="#0062cc"/><g stroke="#fff" stroke-width="1.3" fill="none"><path d="M15.9 17.6h9.2M20.5 13v9.2"/><path d="M40.7 16.4h10.6M40.7 19.4h10.6"/><path d="M16.5 38.7l8.2 8.2M24.7 38.7l-8.2 8.2"/><path d="M40.7 42.9h10.6"/></g></svg></div>
<div class="a tb" style="left:1319.00px"><svg class="ic" style="left:-1px;top:-1px;width:66px;height:60px" viewBox="0 0 66 60"><path d="M13.4 30.3H44" stroke="#c0cce0" stroke-width="3.4" stroke-linecap="round"/><circle cx="48.05" cy="30.4" r="6.5" fill="#0062cc"/></svg></div>
<div class="a tb" style="left:1390.00px"><svg class="ic" style="left:-1px;top:-1px;width:66px;height:60px" viewBox="0 0 66 60"><rect x="9.9" y="22.1" width="47.1" height="14.9" fill="#0062cc"/><path d="M46.5 28.5l3.5 3.1l3.5-3.1" stroke="#fff" stroke-width="1.3" fill="none"/></svg></div>
<div class="a tb" style="left:1461.00px"><svg class="ic" style="left:-1px;top:-1px;width:66px;height:60px" viewBox="0 0 66 60"><circle cx="29.6" cy="26.4" r="9.5" fill="none" stroke="#0062cc" stroke-width="3.4"/><path d="M36.8 33.8L46.6 43.2" stroke="#0062cc" stroke-width="3.4"/><circle cx="29.5" cy="26.5" r="3.6" fill="#0062cc"/><text x="29.5" y="28.5" font-family="Liberation Sans, sans-serif" font-size="5.6" font-weight="700" fill="#fff" text-anchor="middle">?</text></svg></div>
<div class="a" id="ta"></div>
<svg class="ic" style="left:1553px;top:336px;width:17px;height:17px" viewBox="1553 336 17 17"><path d="M1554.9 351.6L1568.8 337.9M1559.1 351.6L1568.8 342.1M1563.1 351.6L1568.8 346.2M1567.1 351.6L1568.8 349.9" stroke="#767676" stroke-width="1.15" fill="none"/></svg>
<div class="a mb" style="left:1037.7px;width:62.00px;border-color:#0062cc"></div>
<svg class="ic" style="left:1057.67px;top:378.20px;width:22.05px;height:19.60px" viewBox="0 -448 576 512"><path fill="#0062cc" transform="scale(1,-1)" d="M571.31 196.69c6.25 -6.25 6.25 -16.3809 0 -22.6309l-46.0596 -46.0596l46.0596 -46.0596c6.25 -6.25 6.25 -16.3809 0 -22.6309l-22.6191 -22.6191c-6.25 -6.25 -16.3809 -6.25 -22.6309 0l-46.0596 46.0596l-46.0596 -46.0596c-6.25 -6.25 -16.3809 -6.25 -22.6309 0 l-22.6191 22.6191c-6.25 6.25 -6.25 16.3809 0 22.6309l46.0596 46.0596l-46.0596 46.0596c-6.25 6.25 -6.25 16.3809 0 22.6309l22.6191 22.6191c6.25 6.25 16.3809 6.25 22.6309 0l46.0596 -46.0596l46.0596 46.0596c6.25 6.25 16.3809 6.25 22.6309 0zM552 448 c13.25 0 24 -10.7402 24 -24v-48c0 -13.25 -10.75 -24 -24 -24h-194.97l-97.8105 -374.52c-9.83984 -32.4805 -37.0098 -41.4805 -54.2793 -41.4805c-18.6406 0 -35.9502 8.5 -48.4404 28.2695l-88.8799 163.73h-43.6201c-13.25 0 -24 10.75 -24 24v48 c0 13.2598 10.75 24 24 24h81.4697c12.0801 -0.00292969 22.584 -6.67871 28.0303 -16.5703l58.4102 -106.1l84.79 322.8c3.68945 14.0703 16.4102 23.8701 30.9502 23.8701h244.35z"/></svg>
<div class="a mb" style="left:1120.2px;width:53.80px;border-color:#0062cc"></div>
<svg class="ic" style="left:1139.75px;top:378.20px;width:14.70px;height:19.60px" viewBox="0 -448 384 512"><path fill="#0062cc" transform="scale(1,-1)" d="M224 312c0 -13.2002 10.7998 -24 24 -24h136v-328c0 -13.2998 -10.7002 -24 -24 -24h-336c-13.2998 0 -24 10.7002 -24 24v464c0 13.2998 10.7002 24 24 24h200v-136zM288 76v8c0 6.59961 -5.40039 12 -12 12h-168c-6.59961 0 -12 -5.40039 -12 -12v-8 c0 -6.59961 5.40039 -12 12 -12h168c6.59961 0 12 5.40039 12 12zM288 140v8c0 6.59961 -5.40039 12 -12 12h-168c-6.59961 0 -12 -5.40039 -12 -12v-8c0 -6.59961 5.40039 -12 12 -12h168c6.59961 0 12 5.40039 12 12zM288 212c0 6.59961 -5.40039 12 -12 12h-168 c-6.59961 0 -12 -5.40039 -12 -12v-8c0 -6.59961 5.40039 -12 12 -12h168c6.59961 0 12 5.40039 12 12v8zM384 326.1v-6.09961h-128v128h6.09961c6.40039 0 12.5 -2.5 17 -7l97.9004 -98c4.5 -4.5 7 -10.5996 7 -16.9004z"/></svg>
<div class="a mb" style="left:1194.0px;width:58.80px;border-color:#0062cc"></div>
<svg class="ic" style="left:1213.60px;top:378.20px;width:19.60px;height:19.60px" viewBox="0 -448 512 512"><path fill="#0062cc" transform="scale(1,-1)" d="M512 304v-288c0 -26.5 -21.5 -48 -48 -48h-416c-26.5 0 -48 21.5 -48 48v288c0 26.5 21.5 48 48 48h88l12.2998 32.9004c7 18.6992 24.9004 31.0996 44.9004 31.0996h125.5c20 0 37.8994 -12.4004 44.8994 -31.0996l12.4004 -32.9004h88c26.5 0 48 -21.5 48 -48zM376 160 c0 66.2002 -53.7998 120 -120 120s-120 -53.7998 -120 -120s53.7998 -120 120 -120s120 53.7998 120 120zM344 160c0 -48.5 -39.5 -88 -88 -88s-88 39.5 -88 88s39.5 88 88 88s88 -39.5 88 -88z"/></svg>
<div class="a mb" style="left:1272.1px;width:61.80px;border-color:#0062cc"></div>
<svg class="ic" style="left:1291.97px;top:378.20px;width:22.05px;height:19.60px" viewBox="0 -448 576 512"><path fill="#0062cc" transform="scale(1,-1)" d="M215.03 376.95c15.0098 15.0098 40.9697 4.49023 40.9697 -16.9697v-335.961c0 -21.4395 -25.9404 -32 -40.9697 -16.9697l-88.9707 88.9502h-102.06c-13.2598 0 -24 10.75 -24 24v144c0 13.2598 10.7402 24 24 24h102.06zM448.35 428.03 c79.9199 -52.46 127.65 -140.7 127.65 -236.03s-47.7305 -183.58 -127.65 -236.04c-11.5801 -7.61035 -26.4697 -3.75977 -33.5098 6.9502c-7.33984 11.1602 -4.21973 26.1797 6.9502 33.5c66.2695 43.4902 105.82 116.6 105.82 195.58 c0 78.9795 -39.5508 152.09 -105.82 195.58c-11.1699 7.33008 -14.29 22.3398 -6.9502 33.5098c7.33008 11.1895 22.3398 14.2803 33.5098 6.9502zM480 192c0 -63.54 -32.0596 -121.94 -85.7695 -156.24c-12 -7.67969 -26.6104 -2.89941 -33.1201 7.45996 c-7.09082 11.29 -3.78027 26.2207 7.40918 33.3604c39.75 25.3896 63.4805 68.5303 63.4805 115.42s-23.7305 90.0303 -63.4805 115.42c-11.1895 7.15039 -14.5 22.0801 -7.40918 33.3604c7.08984 11.2793 21.9297 14.5996 33.1201 7.45996 c53.71 -34.2998 85.7695 -92.71 85.7695 -156.24zM338.23 268.87c28.2393 -15.54 45.7793 -44.9805 45.7793 -76.8604s-17.54 -61.3301 -45.7695 -76.8799c-11.5605 -6.34961 -26.1807 -2.20996 -32.6104 9.4502c-6.38965 11.6104 -2.16016 26.2002 9.4502 32.6104 c12.9004 7.08984 20.9199 20.4297 20.9199 34.8096c0 14.3701 -8.01953 27.7197 -20.9297 34.8096c-11.6104 6.41016 -15.8398 21 -9.4502 32.6104c6.41992 11.6104 21.0303 15.7803 32.6104 9.4502z"/></svg>
<div class="a mb" style="left:1354.1px;width:61.90px;border-color:#0062cc"></div>
<svg class="ic" style="left:1374.02px;top:378.20px;width:22.05px;height:19.60px" viewBox="0 -448 576 512"><path fill="#0062cc" transform="scale(1,-1)" d="M336.2 384c26.3994 0 47.7998 -21.4004 47.7998 -47.7998v-288.4c0 -26.3994 -21.4004 -47.7998 -47.7998 -47.7998h-288.4c-26.3994 0 -47.7998 21.4004 -47.7998 47.7998v288.4c0 26.3994 21.4004 47.7998 47.7998 47.7998h288.4zM525.6 346.3 c21.3008 14.6006 50.4004 -0.399414 50.4004 -25.7998v-256.9c0 -25.5 -29.2002 -40.3994 -50.4004 -25.7998l-109.6 75.5v157.4z"/></svg>
<div class="a mb" style="left:1435px;width:59.00px;border-color:#ffc107"></div>
<svg class="ic" style="left:1454.70px;top:378.20px;width:19.60px;height:19.60px" viewBox="0 -448 512 512"><path fill="#ffc107" transform="scale(1,-1)" d="M464 320c26.5098 0 48 -21.4902 48 -48v-224c0 -26.5098 -21.4902 -48 -48 -48h-416c-26.5098 0 -48 21.4902 -48 48v288c0 26.5098 21.4902 48 48 48h160l64 -64h192zM368 152v16c0 8.83984 -7.16016 16 -16 16h-192c-8.83984 0 -16 -7.16016 -16 -16v-16 c0 -8.83984 7.16016 -16 16 -16h192c8.83984 0 16 7.16016 16 16z"/></svg>
<div class="a mb" style="left:1514px;width:56.80px;border-color:#dc3545"></div>
<svg class="ic" style="left:1533.83px;top:378.20px;width:17.15px;height:19.60px" viewBox="0 -448 448 512"><path fill="#dc3545" transform="scale(1,-1)" d="M432 416c8.83105 0 16 -7.16895 16 -16v-32c0 -8.83105 -7.16895 -16 -16 -16h-416c-8.83105 0 -16 7.16895 -16 16v32c0 8.83105 7.16895 16 16 16h120l9.40039 18.7002c3.85547 7.88574 11.9434 13.2998 21.3066 13.2998h0.0927734h114.3 c0.00585938 0 -0.00195312 0.0234375 0.00390625 0.0234375c9.41113 0 17.5645 -5.42871 21.4961 -13.3232l9.40039 -18.7002h120zM53.2002 -19l-21.2002 339h384l-21.2002 -339c-1.57031 -25.0762 -22.4316 -44.9971 -47.8994 -45h-245.801 c-25.4678 0.00292969 -46.3291 19.9238 -47.8994 45z"/></svg>
<div class="a ig" style="left:329.2px;top:451px;width:597.4px"><i class="p" style="width:53.85px"></i><i class="s" style="width:46.8px"></i></div>
<div class="a cb" style="left:344.20px;top:470.90px"></div>
<svg class="ic" style="left:894.02px;top:472.85px;width:17.06px;height:19.50px" viewBox="0 -448 448 512"><path fill="#dc3545" transform="scale(1,-1)" d="M432 416c8.83105 0 16 -7.16895 16 -16v-32c0 -8.83105 -7.16895 -16 -16 -16h-416c-8.83105 0 -16 7.16895 -16 16v32c0 8.83105 7.16895 16 16 16h120l9.40039 18.7002c3.85547 7.88574 11.9434 13.2998 21.3066 13.2998h0.0927734h114.3 c0.00585938 0 -0.00195312 0.0234375 0.00390625 0.0234375c9.41113 0 17.5645 -5.42871 21.4961 -13.3232l9.40039 -18.7002h120zM53.2002 -19l-21.2002 339h384l-21.2002 -339c-1.57031 -25.0762 -22.4316 -44.9971 -47.8994 -45h-245.801 c-25.4678 0.00292969 -46.3291 19.9238 -47.8994 45z"/></svg>
<div class="a ig" style="left:970px;top:451px;width:596.8px"><i class="p" style="width:53.2px"></i><i class="s" style="width:46.0px"></i></div>
<div class="a cb on" style="left:985.00px;top:470.90px"></div>
<svg class="ic" style="left:985.00px;top:470.90px;width:24px;height:24px" viewBox="0 0 24 24"><path d="M4.2 12.6L9.3 17.4L19.4 6.8" stroke="#fff" stroke-width="1.9" fill="none"/></svg>
<svg class="ic" style="left:1534.92px;top:472.85px;width:17.06px;height:19.50px" viewBox="0 -448 448 512"><path fill="#dc3545" transform="scale(1,-1)" d="M432 416c8.83105 0 16 -7.16895 16 -16v-32c0 -8.83105 -7.16895 -16 -16 -16h-416c-8.83105 0 -16 7.16895 -16 16v32c0 8.83105 7.16895 16 16 16h120l9.40039 18.7002c3.85547 7.88574 11.9434 13.2998 21.3066 13.2998h0.0927734h114.3 c0.00585938 0 -0.00195312 0.0234375 0.00390625 0.0234375c9.41113 0 17.5645 -5.42871 21.4961 -13.3232l9.40039 -18.7002h120zM53.2002 -19l-21.2002 339h384l-21.2002 -339c-1.57031 -25.0762 -22.4316 -44.9971 -47.8994 -45h-245.801 c-25.4678 0.00292969 -46.3291 19.9238 -47.8994 45z"/></svg>
<div class="a ig" style="left:329.2px;top:557.9px;width:597.4px"><i class="p" style="width:53.85px"></i><i class="s" style="width:46.8px"></i></div>
<div class="a cb" style="left:344.20px;top:577.80px"></div>
<svg class="ic" style="left:894.02px;top:579.75px;width:17.06px;height:19.50px" viewBox="0 -448 448 512"><path fill="#dc3545" transform="scale(1,-1)" d="M432 416c8.83105 0 16 -7.16895 16 -16v-32c0 -8.83105 -7.16895 -16 -16 -16h-416c-8.83105 0 -16 7.16895 -16 16v32c0 8.83105 7.16895 16 16 16h120l9.40039 18.7002c3.85547 7.88574 11.9434 13.2998 21.3066 13.2998h0.0927734h114.3 c0.00585938 0 -0.00195312 0.0234375 0.00390625 0.0234375c9.41113 0 17.5645 -5.42871 21.4961 -13.3232l9.40039 -18.7002h120zM53.2002 -19l-21.2002 339h384l-21.2002 -339c-1.57031 -25.0762 -22.4316 -44.9971 -47.8994 -45h-245.801 c-25.4678 0.00292969 -46.3291 19.9238 -47.8994 45z"/></svg>
<div class="a ig" style="left:970px;top:557.9px;width:596.8px"><i class="p" style="width:53.2px"></i><i class="s" style="width:46.0px"></i></div>
<div class="a cb" style="left:985.00px;top:577.80px"></div>
<svg class="ic" style="left:1534.92px;top:579.75px;width:17.06px;height:19.50px" viewBox="0 -448 448 512"><path fill="#dc3545" transform="scale(1,-1)" d="M432 416c8.83105 0 16 -7.16895 16 -16v-32c0 -8.83105 -7.16895 -16 -16 -16h-416c-8.83105 0 -16 7.16895 -16 16v32c0 8.83105 7.16895 16 16 16h120l9.40039 18.7002c3.85547 7.88574 11.9434 13.2998 21.3066 13.2998h0.0927734h114.3 c0.00585938 0 -0.00195312 0.0234375 0.00390625 0.0234375c9.41113 0 17.5645 -5.42871 21.4961 -13.3232l9.40039 -18.7002h120zM53.2002 -19l-21.2002 339h384l-21.2002 -339c-1.57031 -25.0762 -22.4316 -44.9971 -47.8994 -45h-245.801 c-25.4678 0.00292969 -46.3291 19.9238 -47.8994 45z"/></svg>
<div class="a btn" style="left:325px;top:624px;width:83px;height:32px;background:#0062cc;border-radius:3.3px"></div>
<svg class="ic" style="left:331.30px;top:631.10px;width:17.20px;height:17.20px" viewBox="0 -448 512 512"><path fill="#fff" transform="scale(1,-1)" d="M256 440c137 0 248 -111 248 -248s-111 -248 -248 -248s-248 111 -248 248s111 248 248 248zM400 164v56c0 6.59961 -5.40039 12 -12 12h-92v92c0 6.59961 -5.40039 12 -12 12h-56c-6.59961 0 -12 -5.40039 -12 -12v-92h-92c-6.59961 0 -12 -5.40039 -12 -12v-56 c0 -6.59961 5.40039 -12 12 -12h92v-92c0 -6.59961 5.40039 -12 12 -12h56c6.59961 0 12 5.40039 12 12v92h92c6.59961 0 12 5.40039 12 12z"/></svg>
<div class="a" style="left:325.3px;top:675.7px;width:1245.7px;height:1px;background:#dedede"></div>
<div class="a btn" style="left:758.8px;top:705.1px;width:113.3px;height:45.8px;background:#ffc107"></div>
<div class="a btn" style="left:890.7px;top:705.1px;width:104.4px;height:45.8px;background:#0062cc"></div>
<div class="a btn" style="left:1014.1px;top:705.1px;width:122.8px;height:45.8px;background:#6c757d"></div>
<svg class="ic" style="left:778.65px;top:716.90px;width:19.60px;height:19.60px" viewBox="0 -448 512 512"><path fill="#fff" transform="scale(1,-1)" d="M497.941 174.059l-142.059 -142.059h144.117c6.62695 0 12 -5.37305 12 -12v-40c0 -6.62695 -5.37305 -12 -12 -12h-356c-13.2461 0 -25.2529 5.37012 -33.9424 14.0586l-96 96c-18.7441 18.7451 -18.7441 49.1377 0 67.8828l256 256 c18.7471 18.7451 49.1387 18.7441 67.8838 0l160 -160c18.7441 -18.7451 18.7441 -49.1377 0 -67.8828zM195.314 236.686l-124.687 -124.686l80 -80h114.745l67.3135 67.3135z"/></svg>
<svg class="ic" style="left:911.92px;top:716.90px;width:17.15px;height:19.60px" viewBox="0 -448 448 512"><path fill="#fff" transform="scale(1,-1)" d="M433.941 318.059c8.68848 -8.68848 14.0586 -20.6943 14.0586 -33.9404v-268.118c0 -26.5098 -21.4902 -48 -48 -48h-352c-26.5098 0 -48 21.4902 -48 48v352c0 26.5098 21.4902 48 48 48h268.118c13.2461 0 25.252 -5.37012 33.9404 -14.0586zM224 32 c35.3457 0 64 28.6543 64 64s-28.6543 64 -64 64s-64 -28.6543 -64 -64s28.6543 -64 64 -64zM320 336.52c0 3.31152 -1.34277 6.31348 -3.51465 8.48535l-3.48047 3.48047c-2.25 2.25098 -5.30176 3.51465 -8.48535 3.51465h-228.52c-6.62695 0 -12 -5.37305 -12 -12v-104 c0 -6.62695 5.37305 -12 12 -12h232c6.62695 0 12 5.37305 12 12v100.52z"/></svg>
<svg class="ic" style="left:1033.90px;top:716.90px;width:19.60px;height:19.60px" viewBox="0 -448 512 512"><path fill="#fff" transform="scale(1,-1)" d="M256 440c136.967 0 248 -111.034 248 -248s-111.034 -248 -248 -248s-248 111.033 -248 248s111.034 248 248 248zM386.108 322.108c-65.4121 65.4102 -165.435 70.0312 -235.639 20.6758l256.315 -256.313c49.3232 70.1562 44.7705 170.189 -20.6768 235.638z M125.892 61.8916c65.4121 -65.4111 165.436 -70.0312 235.639 -20.6758l-256.315 256.313c-49.3232 -70.1562 -44.7705 -170.189 20.6768 -235.638z"/></svg>

<h2 class="t" id="h2" style="left:325.30px;top:87.02px;font-size:34.9px;line-height:34.9px;font-weight:400;color:#0062cc;transform:scaleX(0.9797)">Edit Question</h2>
<label class="t" id="qt" style="left:325.36px;top:150.02px;font-size:18px;line-height:18px;font-weight:400;color:#333;transform:scaleX(0.9886)">Question Type:</label>
<strong class="t" id="qtv" style="left:454.05px;top:150.02px;font-size:18px;line-height:18px;font-weight:700;color:#333;transform:scaleX(0.9512)">Multiple Choice</strong>
<label class="t" id="ql" style="left:325.35px;top:259.02px;font-size:18px;line-height:18px;font-weight:400;color:#333;transform:scaleX(0.9996)">Question</label>
<div class="t" id="qv" style="left:339.87px;top:306.02px;font-size:30.7px;line-height:30.7px;font-weight:400;color:#343a40;transform:scaleX(0.9851)">¿Quién es el padre de la administración moderna?</div>
<small class="t" id="len" style="left:325.41px;top:366.02px;font-size:18px;line-height:18px;font-weight:400;color:#6c757d;transform:scaleX(1.0071)">Length: 48/4000 charaters</small>
<label class="t" id="o1" style="left:328.88px;top:422.02px;font-size:22px;line-height:22px;font-weight:400;color:#333;transform:scaleX(0.9788);will-change:transform">Option 1:</label>
<label class="t" id="o2" style="left:969.73px;top:422.02px;font-size:22px;line-height:22px;font-weight:400;color:#333;transform:scaleX(0.9788);will-change:transform">Option 2:</label>
<label class="t" id="o3" style="left:328.88px;top:529.02px;font-size:22px;line-height:22px;font-weight:400;color:#333;transform:scaleX(0.9788);will-change:transform">Option 3:</label>
<label class="t" id="o4" style="left:969.73px;top:529.02px;font-size:22px;line-height:22px;font-weight:400;color:#333;transform:scaleX(0.9788);will-change:transform">Option 4:</label>
<div class="t" id="v1" style="left:397.58px;top:468.02px;font-size:30.9px;line-height:30.9px;font-weight:400;color:#0062cc;transform:scaleX(0.9938);will-change:transform">Frederick Winslow Taylor</div>
<div class="t" id="v2" style="left:1038.56px;top:468.02px;font-size:30.9px;line-height:30.9px;font-weight:400;color:#0062cc;transform:scaleX(0.9640);will-change:transform">Henry Fayol</div>
<div class="t" id="v3" style="left:397.64px;top:575.02px;font-size:30.9px;line-height:30.9px;font-weight:400;color:#0062cc;transform:scaleX(0.9688);will-change:transform">Peter Druker</div>
<div class="t" id="v4" style="left:1039.46px;top:575.02px;font-size:30.9px;line-height:30.9px;font-weight:400;color:#0062cc;transform:scaleX(0.9968);will-change:transform">Vilfredo Pareto</div>
<span class="t" id="bopt" style="left:352.44px;top:632.02px;font-size:17.2px;line-height:17.2px;font-weight:400;-webkit-text-stroke:0.90px #fff;color:#fff;transform:scaleX(0.9897)">Option</span>
<span class="t" id="breset" style="left:803.42px;top:718.02px;font-size:19.3px;line-height:19.3px;font-weight:400;-webkit-text-stroke:0.90px #212529;color:#212529;transform:scaleX(0.9546)">Reset</span>
<span class="t" id="bsave" style="left:933.60px;top:718.02px;font-size:19.3px;line-height:19.3px;font-weight:400;-webkit-text-stroke:0.90px #fff;color:#fff;transform:scaleX(0.9369)">Save</span>
<span class="t" id="bcancel" style="left:1058.99px;top:718.02px;font-size:19.3px;line-height:19.3px;font-weight:400;-webkit-text-stroke:0.90px #fff;color:#fff;transform:scaleX(0.9683)">Cancel</span>
</main>
</body></html>
